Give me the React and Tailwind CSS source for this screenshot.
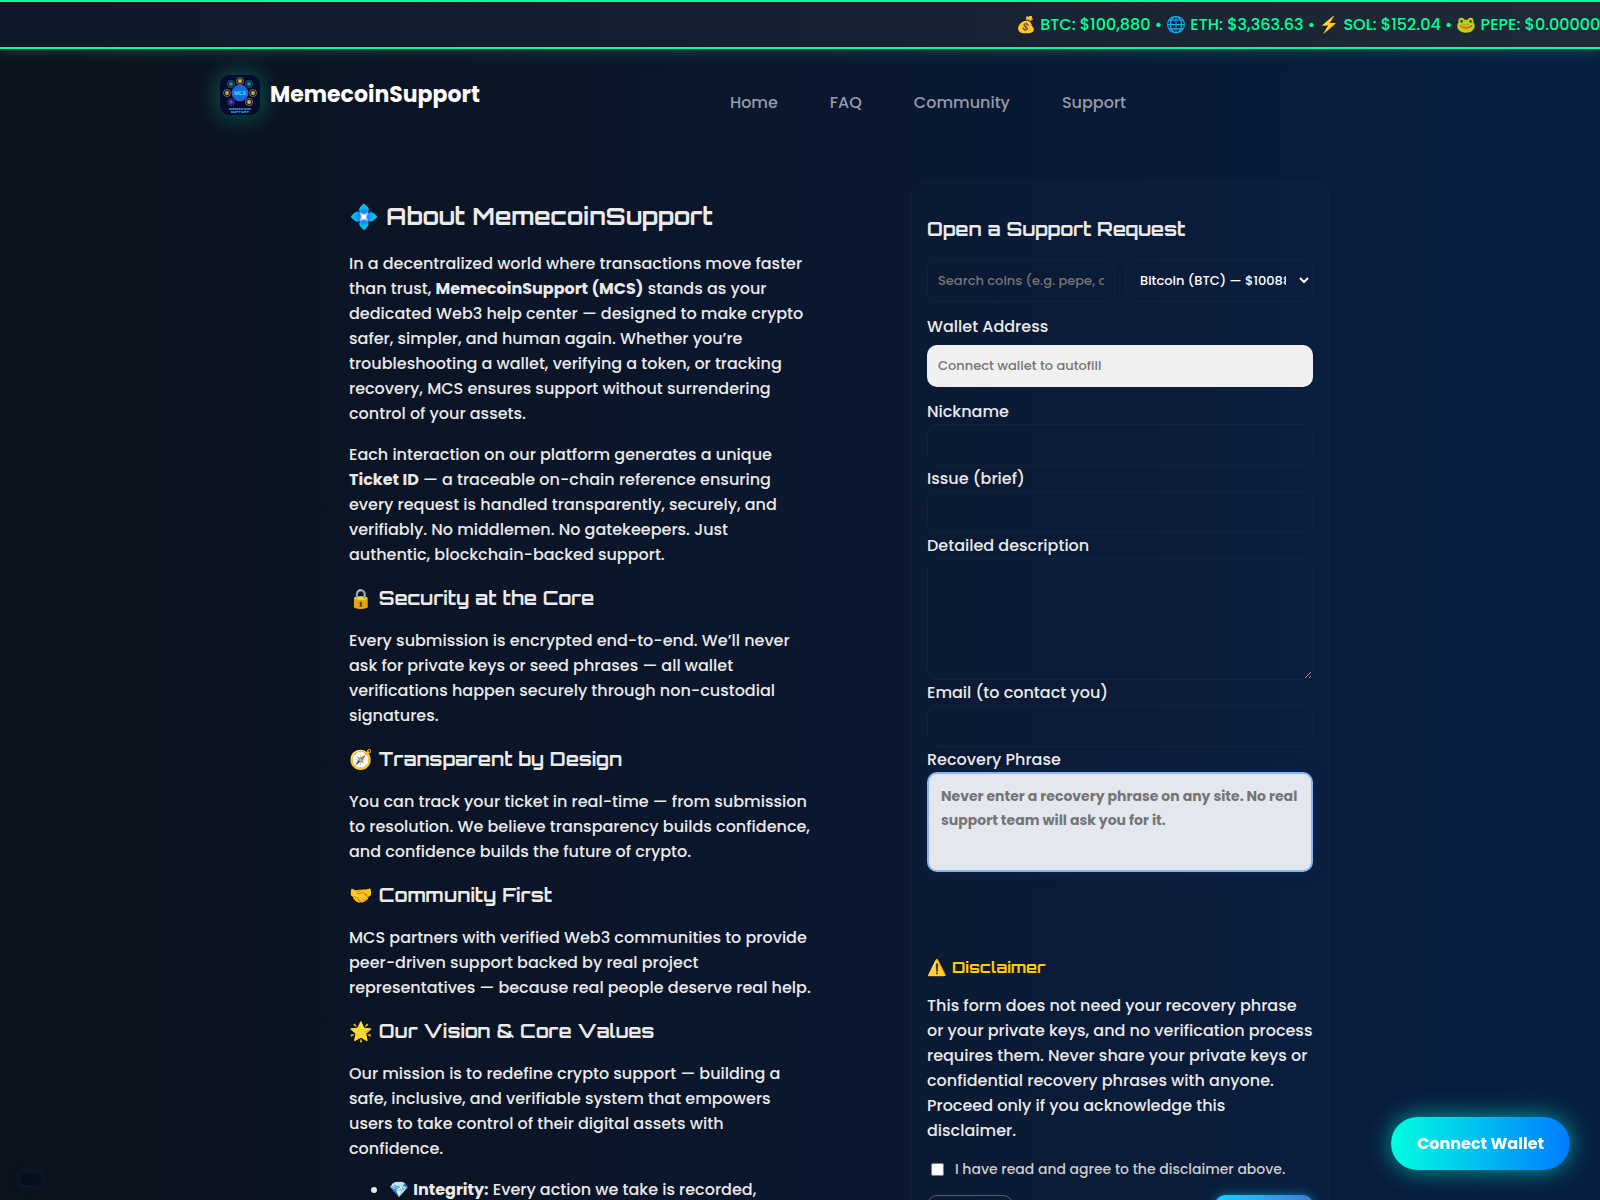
const NAV_LINKS = ["Home", "FAQ", "Community", "Support"];

const TICKER = "💰 BTC: $100,880 • 🌐 ETH: $3,363.63 • ⚡ SOL: $152.04 • 🐸 PEPE: $0.00000595";

const SECTIONS = [
  {
    title: "🔒 Security at the Core",
    body: "Every submission is encrypted end-to-end. We’ll never ask for private keys or seed phrases — all wallet verifications happen securely through non-custodial signatures.",
  },
  {
    title: "🧭 Transparent by Design",
    body: "You can track your ticket in real-time — from submission to resolution. We believe transparency builds confidence, and confidence builds the future of crypto.",
  },
  {
    title: "🤝 Community First",
    body: "MCS partners with verified Web3 communities to provide peer-driven support backed by real project representatives — because real people deserve real help.",
  },
  {
    title: "🌟 Our Vision & Core Values",
    body: "Our mission is to redefine crypto support — building a safe, inclusive, and verifiable system that empowers users to take control of their digital assets with confidence.",
  },
];

const FIELD =
  "block w-full rounded-[10px] border border-white/3 bg-transparent px-[10px] text-[13px] font-medium text-white placeholder:text-[#757575]";

function Logo() {
  const coins = [
    [20, 6, "#e8a53a"],
    [29, 9, "#1f8f86"],
    [11, 9, "#1f8f86"],
    [33, 18, "#d9a032"],
    [7, 18, "#d9a032"],
    [29, 27, "#e8b53a"],
    [11, 27, "#5a3fd0"],
  ];
  return (
    <svg viewBox="0 0 40 40" className="h-10 w-10 rounded-[10px] shadow-[0_0_25px_rgba(0,255,200,0.35)]" aria-hidden="true">
      <rect width="40" height="40" fill="#030b2e" />
      {coins.map(([cx, cy, fill]) => (
        <g key={`${cx}-${cy}`}>
          <circle cx={cx} cy={cy} r="3.6" fill="#0b2346" stroke={fill} strokeWidth="0.5" />
          <circle cx={cx} cy={cy} r="1.9" fill={fill} />
        </g>
      ))}
      <circle cx="20" cy="18" r="7.8" fill="#0870d8" stroke="#6a4df0" strokeWidth="1" />
      <text x="20" y="20" textAnchor="middle" fontSize="5" fontWeight="700" fill="#35d6ff">MCS</text>
      <text x="20" y="34.5" textAnchor="middle" fontSize="4" fontWeight="700" fill="#19b4e6">MEMECOIN</text>
      <text x="20" y="38" textAnchor="middle" fontSize="4" fontWeight="700" fill="#19b4e6">SUPPORT</text>
    </svg>
  );
}

function TextField({ id, label, type = "text" }) {
  return (
    <div>
      <label htmlFor={id} className="block">{label}</label>
      <input id={id} type={type} className={`${FIELD} h-[42px]`} />
    </div>
  );
}

function About() {
  return (
    <section className="max-w-[464px] pt-4">
      <h2 className="mb-4 font-['Orbitron','DejaVu_Sans',sans-serif] text-2xl leading-[37px] font-bold">💠 About MemecoinSupport</h2>
      <p className="mb-4">
        In a decentralized world where transactions move faster than trust, <strong>MemecoinSupport (MCS)</strong> stands
        as your dedicated Web3 help center — designed to make crypto safer, simpler, and human again. Whether you’re
        troubleshooting a wallet, verifying a token, or tracking recovery, MCS ensures support without surrendering
        control of your assets.
      </p>
      <p className="mb-4">
        Each interaction on our platform generates a unique <strong>Ticket ID</strong> — a traceable on-chain reference
        ensuring every request is handled transparently, securely, and verifiably. No middlemen. No gatekeepers. Just
        authentic, blockchain-backed support.
      </p>
      {SECTIONS.map((section) => (
        <div key={section.title} className="mb-4">
          <h3 className="mb-[15px] font-['Orbitron','DejaVu_Sans',sans-serif] text-[19px] leading-[30px] font-bold">{section.title}</h3>
          <p>{section.body}</p>
        </div>
      ))}
      <ul className="list-disc pl-10">
        <li>💎 <strong>Integrity:</strong> Every action we take is recorded, traceable, and open.</li>
      </ul>
    </section>
  );
}

function SupportForm() {
  return (
    <form
      onSubmit={(event) => event.preventDefault()}
      className="rounded-xl border border-white/2 bg-white/1 px-4 pt-8 pb-6"
    >
      <h3 className="mb-4 font-['Orbitron','DejaVu_Sans',sans-serif] text-[19px] leading-7 font-bold">Open a Support Request</h3>
      <div className="grid grid-cols-2 gap-[10px]">
        <input aria-label="Search coins" placeholder="Search coins (e.g. pepe, doge)" className={`${FIELD} h-[43px]`} />
        <select aria-label="Coin" className={`${FIELD} h-[43px]`}>
          <option>Bitcoin (BTC) — $100880</option>
        </select>
      </div>
      <label htmlFor="wallet" className="mt-3 mb-[6px] block">Wallet Address</label>
      <input
        id="wallet"
        readOnly
        placeholder="Connect wallet to autofill"
        className="mb-3 block h-[42px] w-full rounded-[10px] bg-[#f0f0f0] px-[11px] text-[13px] font-medium placeholder:text-[#757575]"
      />
      <TextField id="nickname" label="Nickname" />
      <TextField id="issue" label="Issue (brief)" />
      <label htmlFor="details" className="block">Detailed description</label>
      <textarea id="details" className={`${FIELD} h-[122px] resize-y`} />
      <TextField id="email" label="Email (to contact you)" type="email" />

      {/* Secrets are never collected, so this is a notice and not a field */}
      <p>Recovery Phrase</p>
      <div className="mb-20 h-[100px] rounded-[10px] border-2 border-[#8ab4f0] bg-[#e4e8ee] px-3 py-[10px] text-sm leading-6 font-bold text-[#757575] shadow-[0_0_15px_rgba(0,80,160,0.2)]">
        Never enter a recovery phrase on any site. No real support team will ask you for it.
      </div>

      <h4 className="mb-[11px] font-['Orbitron','DejaVu_Sans',sans-serif] text-base leading-[30px] font-bold text-[#ffcc00]">⚠️ Disclaimer</h4>
      <p>
        This form does not need your recovery phrase or your private keys, and no verification process requires them.
        Never share your private keys or confidential recovery phrases with anyone. Proceed only if you acknowledge this
        disclaimer.
      </p>
      <label className="mt-3 flex items-center gap-[11px] pl-1 text-sm leading-7 text-[#cccccc]">
        <input type="checkbox" className="h-[13px] w-[13px]" />
        I have read and agree to the disclaimer above.
      </label>
      <div className="mt-3 flex justify-between">
        <button type="button" className="h-10 w-[86px] rounded-[10px] border border-white/30 text-sm">Reset</button>
        <button
          type="submit"
          className="h-10 w-[98px] rounded-[10px] bg-linear-to-r from-[#00d4ff] to-[#3a7bd5] text-sm font-bold text-white shadow-[0_0_12px_rgba(0,212,255,0.5)]"
        >
          Submit
        </button>
      </div>
    </form>
  );
}

export default function App() {
  return (
    <div className="h-screen overflow-hidden bg-linear-to-r/srgb from-[#0c121c] via-[#0a172e] to-[#061e42] font-['Poppins','Inter',sans-serif] text-base leading-[25px] font-medium text-[#eaeaea]">
      <div className="flex h-[49px] items-center overflow-hidden border-y-2 border-[#00ff99] bg-linear-to-r/srgb from-[#0f172a] to-[#1f2937] pl-[63.5%] whitespace-nowrap text-[#00ff99] shadow-[0_0_15px_rgba(0,255,153,0.3)]">
        {TICKER}
      </div>

      <header className="mx-auto flex max-w-[1160px] items-center pt-[25px]">
        <a href="#" className="flex items-center gap-[10px] text-[22px] font-bold text-white">
          <Logo />
          MemecoinSupport
        </a>
        <nav className="mt-4 ml-auto flex gap-[52px] pr-[254px] text-[#949ba8]">
          {NAV_LINKS.map((link) => (
            <a key={link} href="#">{link}</a>
          ))}
        </nav>
      </header>

      <main className="mx-auto mt-[67px] grid max-w-[1060px] grid-cols-[1fr_420px] items-start pl-[79px]">
        <About />
        <SupportForm />
      </main>

      <button
        type="button"
        className="fixed right-[30px] bottom-[30px] h-[53px] rounded-full bg-linear-to-r/srgb from-[#00ffe0] to-[#007bff] px-[26px] font-bold text-white shadow-[0_0_25px_rgba(0,255,224,0.6)]"
      >
        Connect Wallet
      </button>
      <div className="fixed bottom-[15px] left-5 h-3 w-[21px] rounded-full bg-[#060d1c] shadow-[0_0_10px_rgba(0,80,200,0.25)]" />
    </div>
  );
}
